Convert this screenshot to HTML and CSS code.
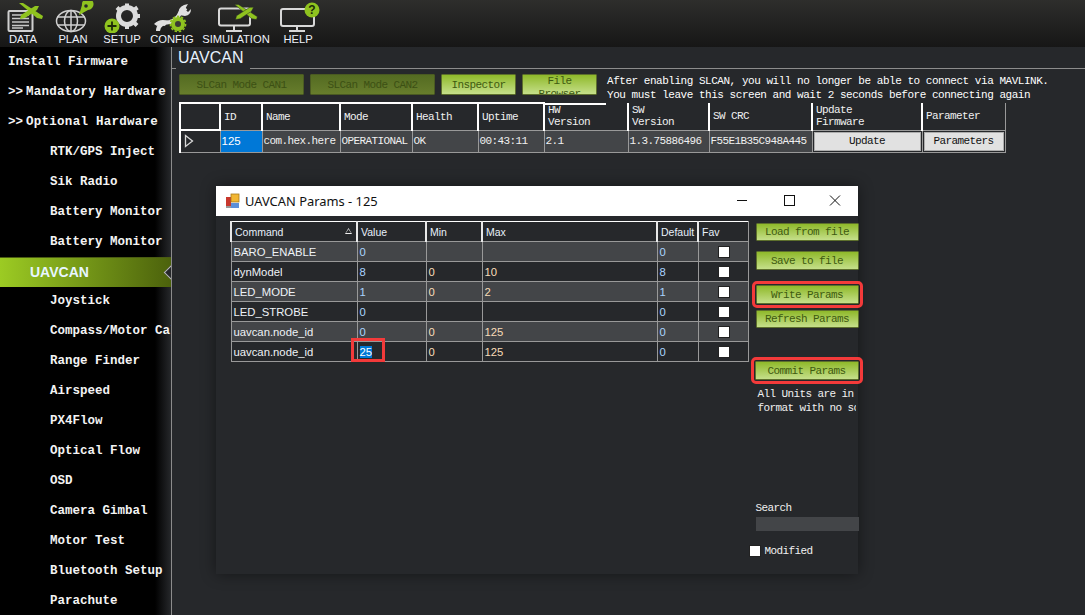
FILE: index.html
```html
<!DOCTYPE html>
<html lang="en">
<head>
    <meta charset="UTF-8">
    <meta name="viewport" content="width=device-width, initial-scale=1.0">
    <title>UAVCAN</title>
    <link rel="stylesheet" href="styles.css">
</head>
<body>
    <header class="topbar">
        <div class="menu-item menu-data">
            <svg class="menu-icon" viewBox="0 0 44 32">
                <rect x="7.500" y="10" width="24" height="20" rx="1" fill="#2a2a2a" stroke="#d0d0d0" stroke-width="2"/>
                <path d="M11 14h17M11 17.500h17M11 21h17M11 24.500h17M11 27h11" stroke="#c8c8c8" stroke-width="1.600"/>
                <g transform="translate(30 10)" fill="#8fc31f">
                    <path d="M-12-8L-8-8 12 5 11 8 6 7Z"/>
                    <path d="M-11 8L-10 4 4-5 8-5 6-1-6 7Z"/>
                </g>
            </svg>
            <span>DATA</span>
        </div>
        <div class="menu-item menu-plan">
            <svg class="menu-icon" viewBox="0 0 44 32">
                <g fill="none" stroke="#cfcfcf" stroke-width="1.500">
                    <ellipse cx="20" cy="20" rx="14.500" ry="10.500"/>
                    <ellipse cx="20" cy="20" rx="6.500" ry="10.500"/>
                    <path d="M20 9.500v21M6 16h28M6 24h28"/>
                </g>
                <path d="M28 14L31 4A5.800 5.800 0 1 1 37 9Z" fill="#8fc31f"/>
                <circle cx="35" cy="5" r="1.800" fill="#26282b"/>
            </svg>
            <span>PLAN</span>
        </div>
        <div class="menu-item menu-setup">
            <svg class="menu-icon" viewBox="0 0 44 32">
                <circle cx="27" cy="15" r="8.500" fill="none" stroke="#dcdcdc" stroke-width="5"/>
                <path d="M27 6.500V2.500M34 9L37.500 6.500M35.500 15H40M33.500 21L37 24.500M27 23.500V28M19.500 9L17 6.500" stroke="#dcdcdc" stroke-width="4"/>
                <circle cx="12" cy="25" r="7.500" fill="#8fc31f"/>
                <path d="M12 20.500v9M7.500 25h9" stroke="#1e2a08" stroke-width="1.800"/>
            </svg>
            <span>SETUP</span>
        </div>
        <div class="menu-item menu-config">
            <svg class="menu-icon" viewBox="0 0 44 32">
                <path d="M8 30Q8 22 20 21Q27 19 30 12L36 7" fill="none" stroke="#e0e0e0" stroke-width="4"/>
                <path d="M4 23Q10 17 18 20L15 25Q10 23 7 25ZM29 14Q27 7 34 4L38 3 35 8 38 11 41 8Q41 14 35 15Z" fill="#e0e0e0"/>
                <circle cx="28" cy="23" r="5" fill="#3a3a34" stroke="#8fc31f" stroke-width="4"/>
                <circle cx="28" cy="23" r="7.600" fill="none" stroke="#8fc31f" stroke-width="1.600" stroke-dasharray="2.500 1.800"/>
            </svg>
            <span>CONFIG</span>
        </div>
        <div class="menu-item menu-sim">
            <svg class="menu-icon" viewBox="0 0 44 32">
                <rect x="5" y="7.500" width="31" height="17" rx="2" fill="none" stroke="#d8d8d8" stroke-width="2"/>
                <path d="M20 25v4M12 30h16" stroke="#d8d8d8" stroke-width="2"/>
                <g transform="translate(32 11) scale(.95)" fill="#8fc31f" stroke="#26282b" stroke-width=".5">
                    <path d="M-12-8L-8-8 12 5 11 8 6 7Z"/>
                    <path d="M-11 8L-10 4 4-5 8-5 6-1-6 7Z"/>
                </g>
            </svg>
            <span>SIMULATION</span>
        </div>
        <div class="menu-item menu-help">
            <svg class="menu-icon" viewBox="0 0 44 32">
                <rect x="5" y="8" width="33" height="17" rx="2" fill="none" stroke="#d8d8d8" stroke-width="2"/>
                <path d="M21 25v4M13 30h16" stroke="#d8d8d8" stroke-width="2"/>
                <circle cx="36" cy="9" r="7.500" fill="#8fc31f"/>
                <text class="help-mark" x="36" y="13" text-anchor="middle">?</text>
            </svg>
            <span>HELP</span>
        </div>
    </header>

    <div class="main">
        <nav class="sidebar">
            <div class="side-item">Install Firmware</div>
            <div class="side-item side-group"><span class="chev">&gt;&gt;</span>Mandatory Hardware</div>
            <div class="side-item side-group"><span class="chev">&gt;&gt;</span>Optional Hardware</div>
            <div class="side-item sub">RTK/GPS Inject</div>
            <div class="side-item sub">Sik Radio</div>
            <div class="side-item sub">Battery Monitor</div>
            <div class="side-item sub">Battery Monitor</div>
            <div class="side-item side-active">UAVCAN<span class="notch"></span></div>
            <div class="side-item sub">Joystick</div>
            <div class="side-item sub">Compass/Motor Calibration</div>
            <div class="side-item sub">Range Finder</div>
            <div class="side-item sub">Airspeed</div>
            <div class="side-item sub">PX4Flow</div>
            <div class="side-item sub">Optical Flow</div>
            <div class="side-item sub">OSD</div>
            <div class="side-item sub">Camera Gimbal</div>
            <div class="side-item sub">Motor Test</div>
            <div class="side-item sub">Bluetooth Setup</div>
            <div class="side-item sub">Parachute</div>
        </nav>

        <section class="content">
            <div class="tab-head">
                <h1 class="tab">UAVCAN</h1>
            </div>
            <div class="toolbar">
                <button class="btn btn-off btn-wide">SLCan Mode CAN1</button>
                <button class="btn btn-off btn-wide">SLCan Mode CAN2</button>
                <button class="btn btn-small">Inspector</button>
                <button class="btn btn-small btn-two">File<br>Browser</button>
                <p class="notice">After enabling SLCAN, you will no longer be able to connect via MAVLINK.<br>You must leave this screen and wait 2 seconds before connecting again</p>
            </div>
            <table class="node-table">
                <colgroup>
                    <col class="nc-head"><col class="nc-id"><col class="nc-name"><col class="nc-mode"><col class="nc-health"><col class="nc-up"><col class="nc-hw"><col class="nc-sw"><col class="nc-crc"><col class="nc-fw"><col class="nc-par">
                </colgroup>
                <thead>
                    <tr>
                        <th class="lined"></th>
                        <th class="lined">ID</th>
                        <th class="lined">Name</th>
                        <th class="lined">Mode</th>
                        <th class="lined">Health</th>
                        <th class="lined">Uptime</th>
                        <th class="half-lined">HW<br>Version</th>
                        <th>SW<br>Version</th>
                        <th>SW CRC</th>
                        <th>Update<br>Firmware</th>
                        <th class="last-head">Parameter</th>
                    </tr>
                </thead>
                <tbody>
                    <tr>
                        <td class="row-head">
                            <svg class="row-arrow" viewBox="0 0 10 14"><path d="M1.500 1.500L8.500 7 1.500 12.500Z" fill="none" stroke="#d8d8d8" stroke-width="1.300"/></svg>
                        </td>
                        <td class="cell-sel">125</td>
                        <td>com.hex.here</td>
                        <td>OPERATIONAL</td>
                        <td>OK</td>
                        <td>00:43:11</td>
                        <td>2.1</td>
                        <td>1.3.75886496</td>
                        <td>F55E1B35C948A445</td>
                        <td class="cell-btn"><button class="grey-btn">Update</button></td>
                        <td class="cell-btn"><button class="grey-btn">Parameters</button></td>
                    </tr>
                </tbody>
            </table>
        </section>
    </div>

    <div class="dialog">
        <div class="dialog-title">
            <svg class="app-icon" viewBox="0 0 16 16">
                <rect x="1" y="4" width="5" height="9" fill="#c8372d"/>
                <rect x="6" y="1" width="8" height="8" fill="#f2b632" stroke="#a87a1a" stroke-width=".8"/>
                <rect x="6" y="10" width="8" height="5" fill="#5c8fd8"/>
                <rect x="1" y="13" width="5" height="2" fill="#999"/>
            </svg>
            <span class="dialog-name">UAVCAN Params - 125</span>
            <svg class="win-btn" viewBox="0 0 46 30"><path d="M17 14.500h10" stroke="#111" fill="none"/></svg>
            <svg class="win-btn" viewBox="0 0 46 30"><rect x="18.500" y="9.500" width="10" height="10" stroke="#111" fill="none"/></svg>
            <svg class="win-btn" viewBox="0 0 46 30"><path d="M18 9.500l10 10M28 9.500l-10 10" stroke="#111" fill="none"/></svg>
        </div>
        <div class="dialog-body">
            <table class="param-table">
                <colgroup>
                    <col class="pc-cmd"><col class="pc-val"><col class="pc-min"><col class="pc-max"><col class="pc-def"><col class="pc-fav">
                </colgroup>
                <thead>
                    <tr>
                        <th class="first-head">Command<span class="sort-mark"></span></th>
                        <th>Value</th>
                        <th>Min</th>
                        <th>Max</th>
                        <th>Default</th>
                        <th>Fav</th>
                    </tr>
                </thead>
                <tbody>
                    <tr>
                        <td>BARO_ENABLE</td><td class="val">0</td><td class="lim"></td><td class="lim"></td><td class="val">0</td>
                        <td class="fav"><input type="checkbox"></td>
                    </tr>
                    <tr>
                        <td>dynModel</td><td class="val">8</td><td class="lim">0</td><td class="lim">10</td><td class="val">8</td>
                        <td class="fav"><input type="checkbox"></td>
                    </tr>
                    <tr>
                        <td>LED_MODE</td><td class="val">1</td><td class="lim">0</td><td class="lim">2</td><td class="val">1</td>
                        <td class="fav"><input type="checkbox"></td>
                    </tr>
                    <tr>
                        <td>LED_STROBE</td><td class="val">0</td><td class="lim"></td><td class="lim"></td><td class="val">0</td>
                        <td class="fav"><input type="checkbox"></td>
                    </tr>
                    <tr>
                        <td>uavcan.node_id</td><td class="val">0</td><td class="lim">0</td><td class="lim">125</td><td class="val">0</td>
                        <td class="fav"><input type="checkbox"></td>
                    </tr>
                    <tr>
                        <td>uavcan.node_id</td>
                        <td class="val editing"><span class="picked">25</span><span class="red-box"></span></td>
                        <td class="lim">0</td><td class="lim">125</td><td class="val">0</td>
                        <td class="fav"><input type="checkbox"></td>
                    </tr>
                </tbody>
            </table>
            <div class="side-panel">
                <button class="btn side-btn load-btn">Load from file</button>
                <button class="btn side-btn save-btn">Save to file</button>
                <button class="btn side-btn write-btn red-mark">Write Params</button>
                <button class="btn side-btn refresh-btn">Refresh Params</button>
                <button class="btn side-btn commit-btn red-mark">Commit Params</button>
                <p class="units-note">All Units are in raw<br>format with no scaling</p>
                <label class="search-label">Search</label>
                <div class="search-box"></div>
                <label class="modified"><input type="checkbox">Modified</label>
            </div>
        </div>
    </div>
</body>
</html>
```

FILE: styles.css
```css
* {
    box-sizing: border-box;
}
html, body {
    height: 100%;
}
body {
    margin: 0;
    overflow: hidden;
    background-color: #26282b;
    font-family: "Liberation Mono", monospace;
    font-size: 11px;
    letter-spacing: -0.6px;
    color: #f0f0f0;
}
p, h1 {
    margin: 0;
}
button {
    font: inherit;
    letter-spacing: inherit;
    cursor: pointer;
}

/* top menu */
.topbar {
    display: flex;
    height: 47px;
    background: linear-gradient(#2e2e2c, #161616);
}
.menu-item {
    display: flex;
    flex-direction: column;
    align-items: center;
    padding-top: 1px;
    font-family: "Liberation Sans", Arial, sans-serif;
    font-size: 11.2px;
    letter-spacing: 0;
    line-height: 13px;
    color: #eef2fa;
    white-space: nowrap;
}
.menu-icon {
    width: 44px;
    height: 32px;
    flex: none;
}
.menu-data { width: 46px; }
.menu-plan { width: 54px; }
.menu-setup { width: 44px; }
.menu-config { width: 56px; }
.menu-sim { width: 72px; }
.menu-help { width: 52px; }
.help-mark {
    font-family: "Liberation Sans", Arial, sans-serif;
    font-size: 12px;
    font-weight: bold;
    fill: #1e2a08;
}

/* left menu */
.main {
    display: flex;
    height: 568px;
}
.sidebar {
    width: 172px;
    flex: none;
    overflow: hidden;
    background: linear-gradient(to right, #000 155px, #26282b 171px);
    border-right: 1px solid #8c8c8c;
    font-size: 12.5px;
    font-weight: bold;
    letter-spacing: 0;
    color: #f4f4f4;
}
.side-item {
    height: 30px;
    padding-left: 8px;
    line-height: 30px;
    white-space: nowrap;
}
.side-group {
    letter-spacing: 0.27px;
}
.chev {
    margin-right: 3px;
    letter-spacing: 0;
}
.sub {
    padding-left: 50px;
}
.side-active {
    position: relative;
    height: 30px;
    margin-bottom: -1px;
    padding-left: 30px;
    background: linear-gradient(to right, #9ccb23, #4c620c);
    border-top: 1px solid #4a5c12;
    font-family: "Liberation Sans", Arial, sans-serif;
    font-size: 14px;
    line-height: 29px;
    color: #e8f6ff;
}
.notch {
    position: absolute;
    right: -6px;
    top: 9px;
    width: 11px;
    height: 11px;
    background-color: #26282b;
    border-left: 1px solid #bbb;
    border-bottom: 1px solid #bbb;
    transform: rotate(45deg);
}

/* uavcan page */
.content {
    flex: 1;
    min-width: 0;
}
.tab-head {
    height: 22px;
    padding-left: 4px;
    border-bottom: 1px solid #8c8c8c;
}
.tab {
    width: 74px;
    height: 22px;
    padding-left: 2px;
    background-color: #26282b;
    font-family: "Liberation Sans", Arial, sans-serif;
    font-size: 16px;
    font-weight: normal;
    letter-spacing: 0;
    line-height: 22px;
    color: #e8f2ff;
}
.toolbar {
    display: flex;
    align-items: flex-start;
    gap: 6px;
    height: 28px;
    margin-top: 5px;
    padding-left: 7px;
}
.btn {
    display: block;
    padding: 0;
    background: linear-gradient(#8fb92a, #c5df8a);
    border: 1px solid #5d6f2c;
    border-radius: 1px;
    color: #3e5a10;
    text-align: center;
    white-space: nowrap;
}
.btn-off {
    background: linear-gradient(#546b22, #677d2c);
    border-color: #4a5a22;
    color: #3c5014;
}
.btn-wide {
    width: 125px;
    height: 21px;
}
.btn-small {
    width: 75px;
    height: 21px;
}
.btn-two {
    overflow: hidden;
    padding-bottom: 6px;
    line-height: 13px;
}
.notice {
    margin-left: 4px;
    font-size: 11px;
    letter-spacing: -0.47px;
    line-height: 14px;
    white-space: nowrap;
    color: #fff;
}

.node-table {
    width: 825px;
    margin-left: 7px;
    table-layout: fixed;
    border-collapse: collapse;
}
.nc-head { width: 40px; }
.nc-id { width: 42px; }
.nc-name { width: 78px; }
.nc-mode { width: 72px; }
.nc-health { width: 66px; }
.nc-up { width: 66px; }
.nc-hw { width: 84px; }
.nc-sw { width: 81px; }
.nc-crc { width: 103px; }
.nc-fw { width: 110px; }
.nc-par { width: 83px; }
.node-table th {
    height: 27px;
    padding: 0 0 0 3px;
    border-left: 2px solid #fff;
    font-weight: normal;
    line-height: 12px;
    text-align: left;
    white-space: nowrap;
}
.node-table th.lined {
    border-top: 2px solid #fff;
}
.node-table th.half-lined {
    background: linear-gradient(#fff, #fff) no-repeat left top / 61px 2px;
}
.node-table th.last-head {
    border-right: 1px solid #999;
}
.node-table td {
    height: 22px;
    padding: 0 0 0 1px;
    background-color: #434548;
    border: 1px solid #999;
    white-space: nowrap;
    overflow: hidden;
}
.node-table td.row-head {
    background-color: #26282b;
    border-top: 2px solid #fff;
    border-left: 2px solid #fff;
}
.row-arrow {
    display: block;
    width: 10px;
    height: 14px;
    margin-left: 2px;
}
.node-table td.cell-sel {
    background-color: #0078d7;
    font-family: "Liberation Sans", Arial, sans-serif;
    font-size: 11.5px;
    letter-spacing: 0;
    color: #fff;
}
.node-table td.cell-btn {
    padding: 1px;
    background-color: #26282b;
}
.grey-btn {
    display: block;
    width: 100%;
    height: 19px;
    padding: 0;
    background-color: #e1e1e1;
    border: 1px solid #adadad;
    color: #111;
}

/* params window */
.dialog {
    position: absolute;
    left: 216px;
    top: 186px;
    width: 642px;
    height: 388px;
    background-color: #26282b;
    box-shadow: 0 0 14px rgba(0, 0, 0, 0.45);
}
.dialog-title {
    display: flex;
    align-items: center;
    height: 30px;
    padding-left: 9px;
    background-color: #fff;
    font-family: "Noto Sans", sans-serif;
    font-size: 12.9px;
    letter-spacing: 0;
    color: #111;
}
.app-icon {
    width: 16px;
    height: 16px;
    margin-right: 4px;
}
.dialog-name {
    flex: 1;
}
.win-btn {
    width: 46px;
    height: 30px;
}
.dialog-body {
    display: flex;
    align-items: flex-start;
    padding: 5px 0 0 14px;
}
.param-table {
    width: 517px;
    flex: none;
    table-layout: fixed;
    border-collapse: collapse;
    font-family: "Liberation Sans", Arial, sans-serif;
    font-size: 11.3px;
    letter-spacing: 0;
}
.pc-cmd { width: 126px; }
.pc-val { width: 69px; }
.pc-min { width: 56px; }
.pc-max { width: 175px; }
.pc-def { width: 41px; }
.pc-fav { width: 50px; }
.param-table th {
    position: relative;
    height: 20px;
    padding: 0 0 0 3px;
    border-top: 1px solid #fff;
    border-left: 2px solid #e8e8e8;
    border-right: 1px solid #26282b;
    font-size: 10.5px;
    font-weight: normal;
    text-align: left;
    white-space: nowrap;
    color: #e8f0fa;
}
.param-table th:last-child {
    border-right: 1px solid #999;
}
.sort-mark {
    position: absolute;
    right: 4px;
    top: 6px;
    width: 7px;
    height: 6px;
    background-color: #eee;
    clip-path: polygon(50% 0, 100% 100%, 0 100%, 14% 84%, 86% 84%, 50% 22%, 14% 84%, 0 100%);
}
.param-table td {
    height: 20px;
    padding: 0 0 0 2px;
    border: 1px solid #999;
    white-space: nowrap;
    color: #eef2f6;
}
.param-table tbody tr:nth-child(odd) td {
    background-color: #434548;
}
.param-table td.val {
    color: #a9d4ff;
}
.param-table td.lim {
    color: #f8dcb8;
}
.fav {
    text-align: center;
}
.fav input, .modified input {
    appearance: none;
    display: block;
    width: 12px;
    height: 12px;
    margin: 0 auto;
    background-color: #fff;
    border: 1px solid #222;
}
.editing {
    position: relative;
}
.picked {
    background-color: #0078d7;
    color: #fff;
}
.red-box {
    position: absolute;
    left: -7px;
    top: -4px;
    width: 34px;
    height: 24px;
    border: 3px solid #f33a3a;
}

.side-panel {
    display: flex;
    flex-direction: column;
    align-items: flex-start;
    width: 103px;
    flex: none;
    margin-left: 7px;
    padding-top: 2px;
}
.side-btn {
    width: 103px;
    height: 19px;
}
.load-btn { height: 18px; }
.save-btn { margin-top: 10px; }
.write-btn { margin-top: 15px; }
.refresh-btn {
    height: 18px;
    margin-top: 6px;
}
.commit-btn {
    width: 104px;
    margin: 33px 0 0 -1px;
}
.red-mark {
    outline: 3px solid #f33a3a;
    outline-offset: 1px;
}
.units-note {
    width: 100px;
    margin-top: 7px;
    padding-left: 2px;
    overflow: hidden;
    line-height: 14px;
    white-space: nowrap;
}
.search-label {
    margin-top: 86px;
    line-height: 14px;
}
.search-box {
    width: 103px;
    height: 14px;
    margin-top: 2px;
    background-color: #434548;
}
.modified {
    display: flex;
    align-items: center;
    gap: 4px;
    margin: 14px 0 0 -7px;
    line-height: 12px;
}
.modified input {
    margin: 0;
}
```
